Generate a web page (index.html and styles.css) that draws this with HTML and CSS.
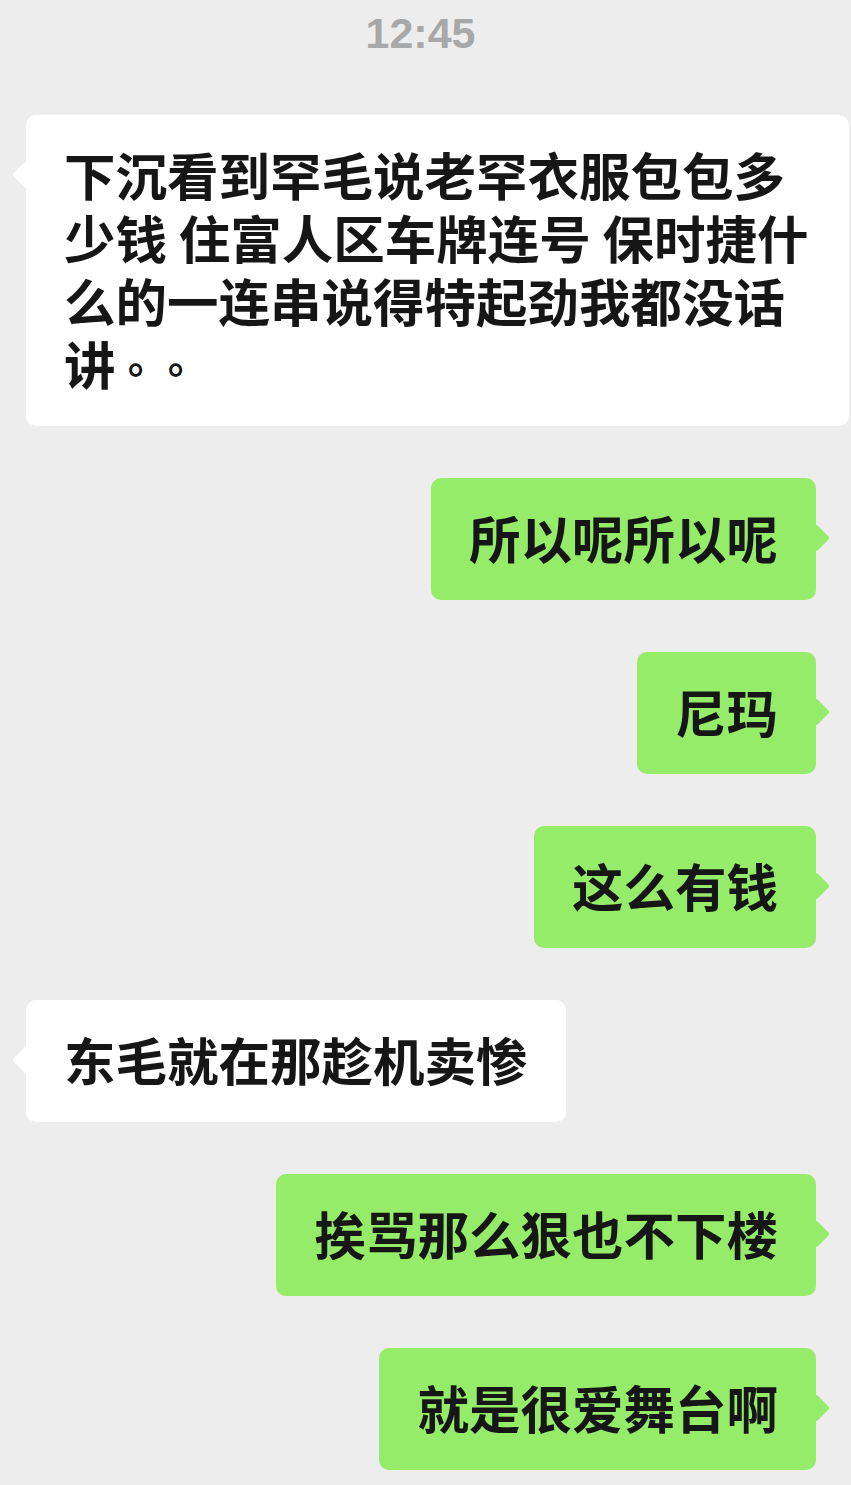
FILE: index.html
```html
<!DOCTYPE html>
<html lang="zh-CN">
<head>
    <meta charset="UTF-8">
    <meta name="viewport" content="width=device-width, initial-scale=1.0">
    <title>聊天</title>
    <link rel="stylesheet" href="styles.css">
</head>
<body>
    <div class="time">12:45</div>

    <div class="chat">
        <div class="row left">
            <div class="bubble">下沉看到罕毛说老罕衣服包包多少钱 住富人区车牌连号 保时捷什么的一连串说得特起劲我都没话讲<span class="dots" lang="zh-TW">。。</span></div>
        </div>
        <div class="row right">
            <div class="bubble">所以呢所以呢</div>
        </div>
        <div class="row right">
            <div class="bubble">尼玛</div>
        </div>
        <div class="row right">
            <div class="bubble">这么有钱</div>
        </div>
        <div class="row left">
            <div class="bubble">东毛就在那趁机卖惨</div>
        </div>
        <div class="row right">
            <div class="bubble">挨骂那么狠也不下楼</div>
        </div>
        <div class="row right">
            <div class="bubble">就是很爱舞台啊</div>
        </div>
    </div>
</body>
</html>
```

FILE: styles.css
```css
body {
    background-color: #ededed;
    margin: 0;
    padding: 0;
    font-family: "Noto Sans CJK SC", sans-serif;
    color: #161616;
}

.time {
    height: 66px;
    line-height: 66px;
    padding-right: 10px;
    text-align: center;
    font-family: "Liberation Sans", Arial, sans-serif;
    font-size: 43px;
    font-weight: bold;
    color: #a8a8a8;
}

.chat {
    display: flex;
    flex-direction: column;
    gap: 52px;
    margin-top: 49px;
    padding-bottom: 40px;
}

.row {
    display: flex;
}

.row.left {
    justify-content: flex-start;
    padding-left: 26px;
}

.row.right {
    justify-content: flex-end;
    padding-right: 35px;
}

.bubble {
    position: relative;
    box-sizing: border-box;
    max-width: 823px;
    padding: 27px 38px 32px;
    border-radius: 10px;
    font-size: 51.5px;
    font-weight: bold;
    line-height: 63px;
    background-color: #ffffff;
}

/* centred full stops, like the phone font draws them */
.dots {
    font-family: "Noto Sans CJK TC", sans-serif;
    font-size: 40px;
    line-height: 0;
}

/* little arrow pointing to the sender */
.bubble::before {
    content: "";
    position: absolute;
    top: 50px;
    width: 20px;
    height: 20px;
    border-radius: 3px;
    background-color: inherit;
    transform: rotate(45deg);
}

.left .bubble::before {
    left: -10px;
}

.right .bubble {
    background-color: #95ec69;
}

.right .bubble::before {
    right: -10px;
}
```
